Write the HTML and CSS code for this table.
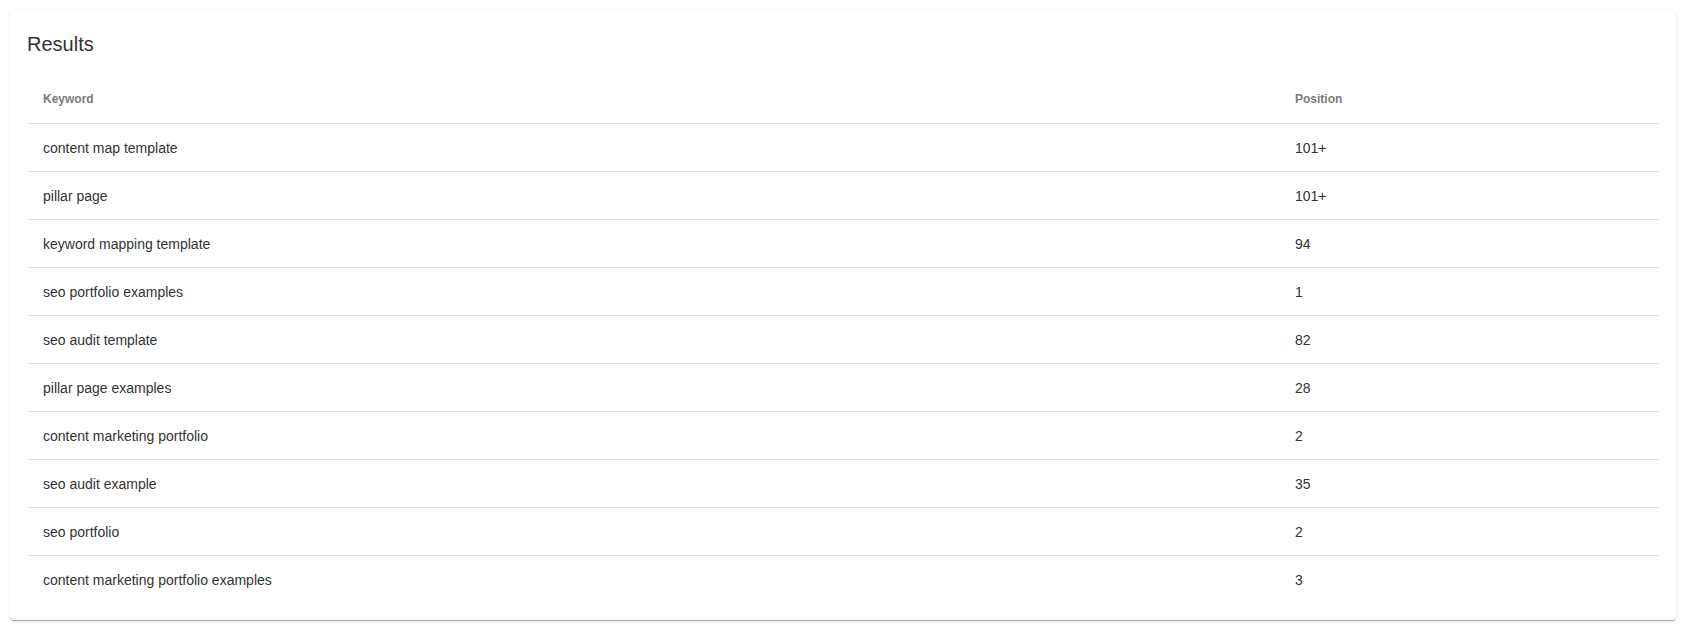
FILE: index.html
```html
<!DOCTYPE html>
<html lang="en">
<head>
<meta charset="utf-8">
<title>Results</title>
<link rel="stylesheet" href="styles.css">
</head>
<body>
<div class="page">
  <section class="card">
    <h2 class="card-title">Results</h2>
    <div class="table">
      <div class="row head">
        <div class="cell">Keyword</div>
        <div class="cell">Position</div>
      </div>
      <div class="row"><div class="cell">content map template</div><div class="cell">101+</div></div>
      <div class="row"><div class="cell">pillar page</div><div class="cell">101+</div></div>
      <div class="row"><div class="cell">keyword mapping template</div><div class="cell">94</div></div>
      <div class="row"><div class="cell">seo portfolio examples</div><div class="cell">1</div></div>
      <div class="row"><div class="cell">seo audit template</div><div class="cell">82</div></div>
      <div class="row"><div class="cell">pillar page examples</div><div class="cell">28</div></div>
      <div class="row"><div class="cell">content marketing portfolio</div><div class="cell">2</div></div>
      <div class="row"><div class="cell">seo audit example</div><div class="cell">35</div></div>
      <div class="row"><div class="cell">seo portfolio</div><div class="cell">2</div></div>
      <div class="row"><div class="cell">content marketing portfolio examples</div><div class="cell">3</div></div>
    </div>
  </section>
</div>
</body>
</html>
```

FILE: styles.css
```css
* { box-sizing: border-box; }
html, body { margin: 0; padding: 0; background: #ffffff; }
body { font-family: "Liberation Sans", Arial, sans-serif; }
.page { padding: 10px; }
.card {
  background: #fff;
  border-radius: 4px;
  padding: 16px 17px 16px 17px;
  box-shadow: 0 2px 1px -1px rgba(0,0,0,.2), 0 1px 1px 0 rgba(0,0,0,.14), 0 1px 3px 0 rgba(0,0,0,.12);
}
.card-title {
  margin: 2px 0 16px 0;
  font-size: 20px;
  line-height: 32px;
  font-weight: 400;
  color: #333333;
}
.table { display: flex; flex-direction: column; }
.row {
  display: grid;
  grid-template-columns: 1252px 1fr;
  height: 48px;
  align-items: center;
  border-bottom: 1px solid #e0e0e0;
  font-size: 14px;
  color: #333333;
}
.row:last-child { border-bottom-color: transparent; }
.cell { padding-left: 16px; }
.row.head { font-size: 12px; font-weight: 700; color: #7a7a7a; padding-bottom: 2px; }
```
